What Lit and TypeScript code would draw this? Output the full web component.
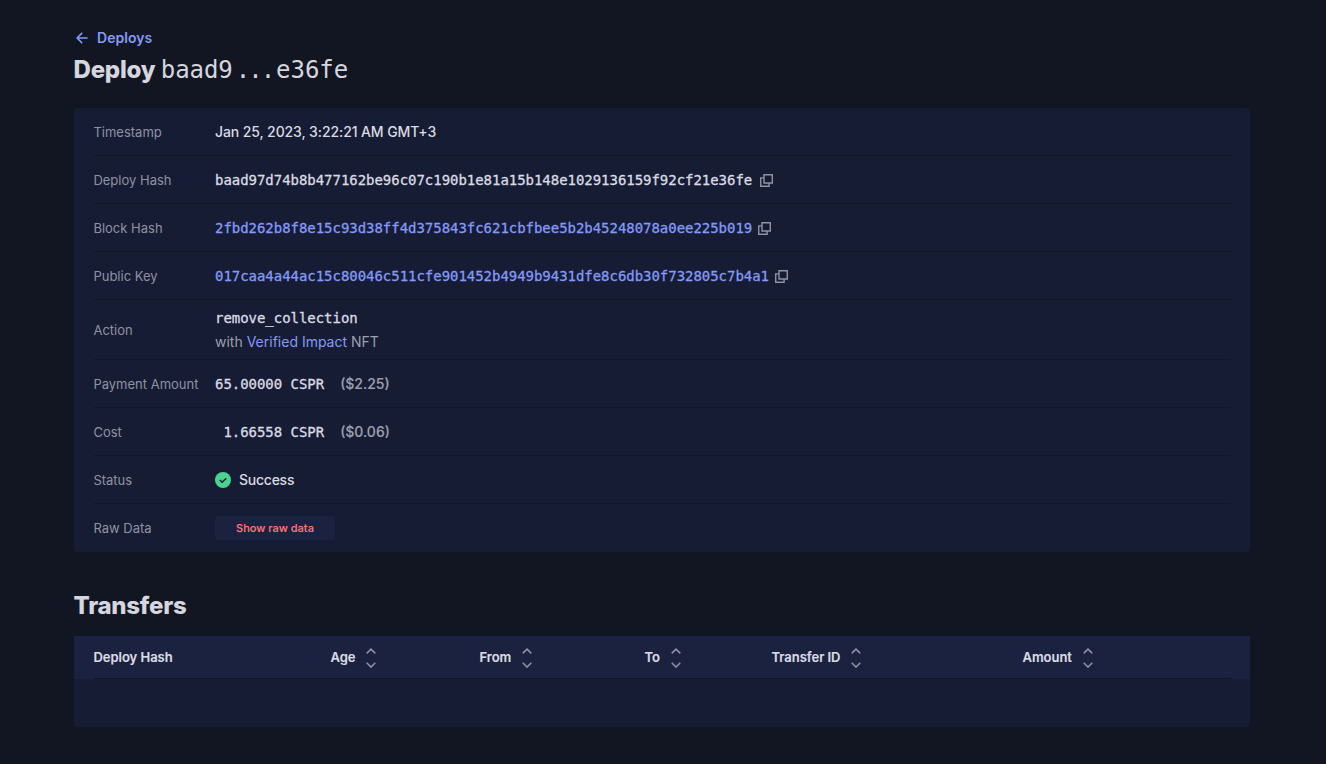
import { LitElement, html, css } from "lit";
import { customElement } from "lit/decorators.js";

const copyIcon = html`<svg class="copy" width="13" height="13" viewBox="0 0 13 13" fill="none" stroke="currentColor" stroke-width="1.4"><path d="M4 .7h8.3V9H4z"/><path d="M4 3.9H.7v8.4h8.4V9"/></svg>`;
const sortIcon = html`<svg class="sort" width="10" height="20" viewBox="0 0 10 20" fill="none" stroke="currentColor" stroke-width="1.5"><path d="M.7 5.4 5 1.1l4.3 4.3M.7 14.8 5 19.1l4.3-4.3"/></svg>`;

@customElement("app-root")
export class AppRoot extends LitElement {
  static styles = css`
    :host { display: block; min-height: 764px; background: #121622; color: #dadbe3; font: 500 14px/24px Inter, sans-serif; box-sizing: border-box; padding: 26px 76px 0 74px; }
    * { box-sizing: border-box; }
    .back { display: flex; align-items: center; height: 24px; padding-left: 2px; gap: 9px; color: #8599f8; font-weight: 600; letter-spacing: 0.05px; }
    .link { color: #8599f8; }
    .back svg { display: block; }
    h1, h2 { margin: 0; font-size: 24px; font-weight: 800; letter-spacing: -0.25px; color: #d5d6df; }
    h1 { display: flex; align-items: baseline; height: 32px; line-height: 32px; margin-top: 4px; gap: 5.5px; margin-left: -0.4px; }
    .short { font: 400 24px/32px "DejaVu Sans Mono", monospace; letter-spacing: -0.05px; }
    .dots { letter-spacing: -1.9px; margin: 0 2.7px 0 3px; }
    .panel { margin-top: 22px; background: #161c34; border-radius: 4px; padding: 0 19px 0 20px; }
    .row { display: flex; align-items: center; height: 48px; border-bottom: 1px solid #121622; }
    .row:last-child { border-bottom-color: transparent; }
    .tall { height: 60px; }
    .label { width: 121px; flex: none; color: #9092a3; font-weight: 400; font-size: 13px; text-indent: -0.6px; }
    .value { display: flex; align-items: center; letter-spacing: -0.1px; }
    .stack { display: block; letter-spacing: 0; }
    .mono { font-family: "DejaVu Sans Mono", monospace; font-size: 14px; letter-spacing: -0.035px; white-space: pre; font-weight: 400; -webkit-text-stroke: 0.3px currentColor; }
    .copy { color: #9092a3; margin: 1.5px 0 0 7.5px; display: block; }
    .near .copy { margin-left: 5.8px; }
    .dim { color: #9d9fae; font-weight: 400; }
    .usd { color: #9d9fae; margin-left: 16px; letter-spacing: 0; -webkit-text-stroke: 0.15px currentColor; }
    .ok { margin-right: 8px; display: block; }
    .success { letter-spacing: -0.25px; }
    button { width: 120px; height: 24px; border: 0; border-radius: 3px; background: #1b2240; color: #ff7878; font: 500 11px/24px Inter, sans-serif; padding: 0; -webkit-text-stroke: 0.1px currentColor; }
    h2 { margin-top: 38px; height: 32px; line-height: 32px; margin-left: -0.5px; }
    .table { margin-top: 14px; height: 91px; background: #161c34; border-radius: 0 0 4px 4px; }
    .head { background: #1b2240; height: 43px; padding: 0 19px 0 20px; }
    .cols { display: grid; grid-template-columns: 237px 149px 165px 127px 251px 1fr; height: 43px; border-bottom: 1px solid #121622; font-size: 13px; font-weight: 600; text-indent: -0.5px; -webkit-text-stroke: 0.15px currentColor; }
    .cell { display: flex; align-items: center; gap: 10.6px; letter-spacing: -0.03px; }
    .sort { color: #9092a3; display: block; margin-top: 2px; }
  `;

  row(label: string, value: unknown, cls = "") {
    return html`<div class="row ${cls}"><div class="label">${label}</div><div class="value">${value}</div></div>`;
  }

  render() {
    return html`
      <div class="back"><svg width="12" height="12" viewBox="0 0 12 12" fill="none" stroke="currentColor" stroke-width="1.5"><path d="M11.6 6H1M6.2 .9 1.1 6l5.1 5.1"/></svg><span>Deploys</span></div>
      <h1><span>Deploy</span><span class="short">baad9<span class="dots">...</span>e36fe</span></h1>
      <div class="panel">
        ${this.row("Timestamp", "Jan 25, 2023, 3:22:21 AM GMT+3")}
        ${this.row("Deploy Hash", html`<span class="mono">baad97d74b8b477162be96c07c190b1e81a15b148e1029136159f92cf21e36fe</span>${copyIcon}`)}
        ${this.row("Block Hash", html`<span class="mono link">2fbd262b8f8e15c93d38ff4d375843fc621cbfbee5b2b45248078a0ee225b019</span>${copyIcon}`, "near")}
        ${this.row("Public Key", html`<span class="mono link">017caa4a44ac15c80046c511cfe901452b4949b9431dfe8c6db30f732805c7b4a1</span>${copyIcon}`, "near")}
        ${this.row("Action", html`<div class="stack"><div class="mono">remove_collection</div><div class="dim">with <span class="link">Verified Impact</span> NFT</div></div>`, "tall")}
        ${this.row("Payment Amount", html`<span class="mono">65.00000 CSPR</span><span class="usd">($2.25)</span>`)}
        ${this.row("Cost", html`<span class="mono"> 1.66558 CSPR</span><span class="usd">($0.06)</span>`)}
        ${this.row("Status", html`<svg class="ok" width="16" height="16" viewBox="0 0 16 16" fill="none"><circle cx="8" cy="8" r="8" fill="#4bd48f"/><path d="m4.8 8 2.3 2.3 4.2-4" stroke="#161c34" stroke-width="1.3"/></svg><span class="success">Success</span>`)}
        ${this.row("Raw Data", html`<button>Show raw data</button>`)}
      </div>
      <h2>Transfers</h2>
      <div class="table"><div class="head"><div class="cols">
        <div class="cell">Deploy Hash</div>
        ${["Age", "From", "To", "Transfer ID", "Amount"].map((t) => html`<div class="cell">${t}${sortIcon}</div>`)}
      </div></div></div>
    `;
  }
}
